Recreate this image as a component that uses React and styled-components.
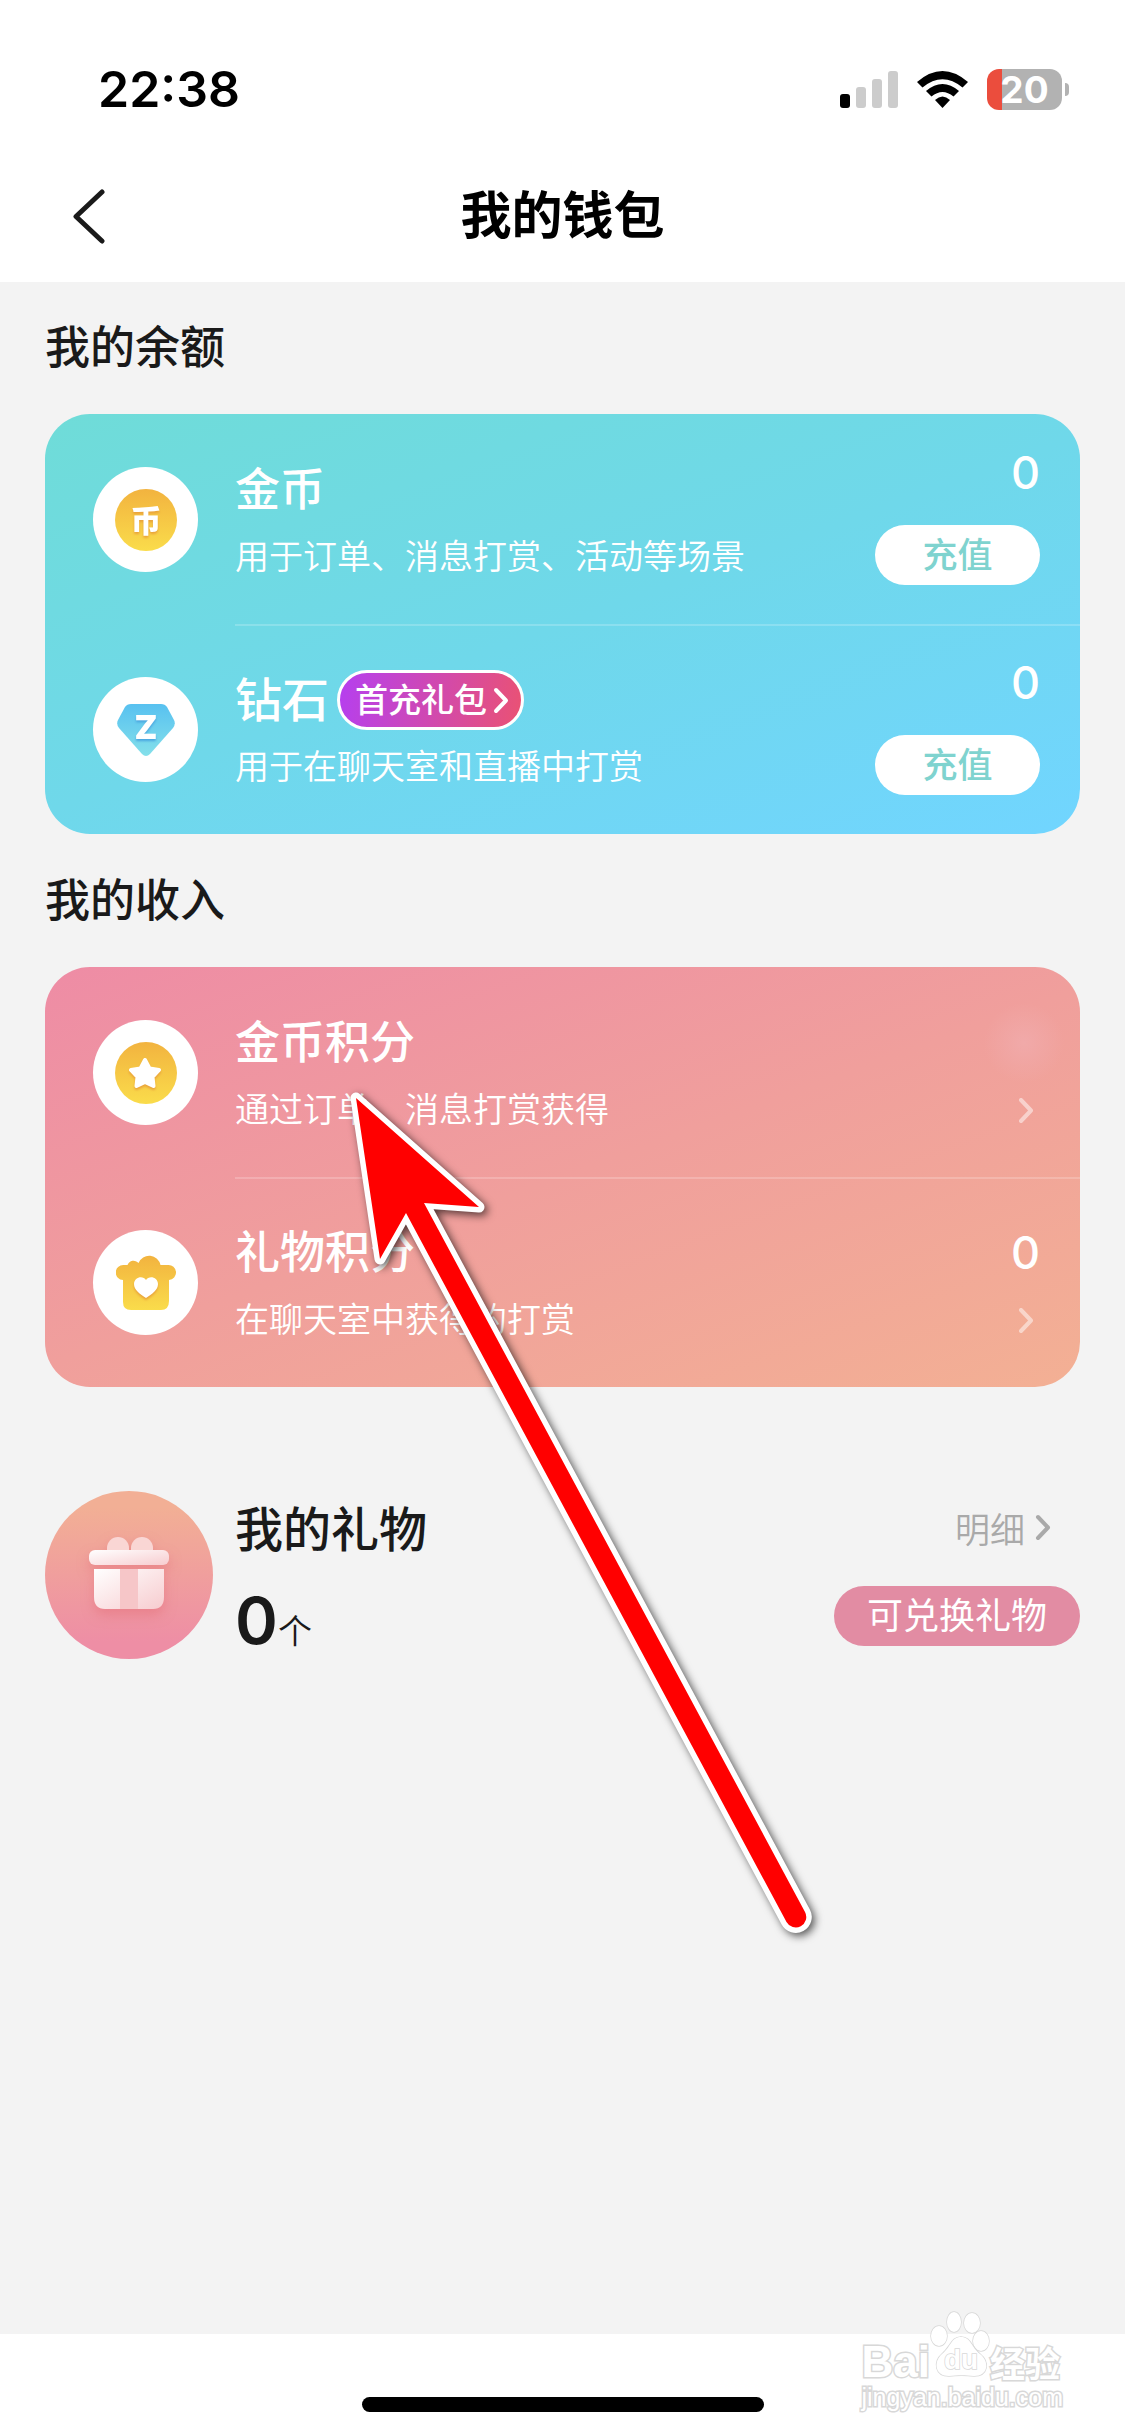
import React from "react";
import styled, { createGlobalStyle } from "styled-components";

const GlobalStyle = createGlobalStyle`
  * {
    box-sizing: border-box;
  }
  body {
    margin: 0;
    background: #f3f3f3;
    font-family: "Inter", "Noto Sans CJK SC", sans-serif;
    color: #1a1a1a;
  }
  h1, h2, h3, p {
    margin: 0;
    font-weight: 500;
  }
  button {
    border: none;
    padding: 0;
    background: none;
    font-family: inherit;
    color: inherit;
    cursor: pointer;
  }
  a {
    color: inherit;
    text-decoration: none;
  }
  svg {
    display: block;
    flex-shrink: 0;
  }
`;

const Page = styled.div`
  position: relative;
  min-height: 100vh;
  display: flex;
  flex-direction: column;
  overflow: hidden;
`;

const Top = styled.header`
  background: #fff;
`;

const StatusBar = styled.div`
  display: flex;
  align-items: center;
  justify-content: space-between;
  height: 150px;
  padding: 28px 56px 0 98px;
`;

const Time = styled.span`
  font-size: 50px;
  line-height: 60px;
  font-weight: 600;
  color: #000;
`;

const StatusIcons = styled.div`
  display: flex;
  align-items: center;
  gap: 19px;
`;

const Battery = styled.div`
  display: flex;
  align-items: center;
  gap: 3px;
`;

const BatteryBody = styled.span`
  display: flex;
  align-items: center;
  justify-content: center;
  width: 75px;
  height: 41px;
  border-radius: 12px;
  background: linear-gradient(90deg, #eb4d3d 20%, #b2b2b2 20%);
  color: #fff;
  font-size: 37px;
  line-height: 41px;
  font-weight: 700;
`;

const BatteryCap = styled.span`
  width: 4px;
  height: 13px;
  border-radius: 0 4px 4px 0;
  background: #b2b2b2;
`;

const NavBar = styled.nav`
  display: grid;
  grid-template-columns: 120px 1fr 120px;
  align-items: center;
  height: 132px;
`;

const BackButton = styled.button`
  display: flex;
  align-items: center;
  padding-left: 72px;
  height: 100%;
`;

const PageTitle = styled.h1`
  text-align: center;
  font-size: 51px;
  line-height: 72px;
  font-weight: 700;
  color: #000;
`;

const Content = styled.main`
  flex: 1;
  padding: 0 45px;
`;

const SectionTitle = styled.h2`
  padding: 30px 0;
  font-size: 45px;
  line-height: 72px;

  ${Content} section + & {
    padding: 31px 0 30px;
  }
`;

const Card = styled.section`
  border-radius: 45px;
  overflow: hidden;
  background: linear-gradient(160deg, ${(props) => props.$from}, ${(props) => props.$mid}, ${(props) => props.$to});
  color: #fff;
`;

const Row = styled.div`
  display: flex;
  height: 210px;
  padding-left: 48px;
`;

const IconCircle = styled.div`
  display: flex;
  align-items: center;
  justify-content: center;
  flex-shrink: 0;
  width: 105px;
  height: 105px;
  margin: 53px 37px 0 0;
  border-radius: 50%;
  background: #fff;
`;

const RowBody = styled.div`
  display: flex;
  flex: 1;
  justify-content: space-between;
  padding-right: 40px;
  border-top: 2px solid ${(props) => (props.$divider ? "rgba(255, 255, 255, 0.2)" : "transparent")};
`;

const RowText = styled.div`
  padding-top: 43px;
`;

const NameLine = styled.div`
  display: flex;
  align-items: center;
  gap: 8px;
  height: 62px;
`;

const Name = styled.h3`
  font-size: ${(props) => (props.$large ? 47 : 45)}px;
  line-height: 62px;
`;

const Desc = styled.p`
  padding-top: 12px;
  font-size: 34px;
  line-height: 48px;
  font-weight: 350;
`;

const PackBadge = styled.button`
  display: flex;
  align-items: center;
  gap: 6px;
  height: 60px;
  padding: 0 12px 0 15px;
  border: 3px solid #fff;
  border-radius: 30px;
  background: linear-gradient(100deg, #b53ff0, #ea5273);
  font-size: 33px;
  line-height: 54px;
  font-weight: 500;
`;

const RowSide = styled.div`
  display: flex;
  flex-direction: column;
  align-items: flex-end;
  padding-top: ${(props) => (props.$low ? 47 : 30)}px;
`;

const Amount = styled.span`
  font-size: 45px;
  line-height: 54px;
  font-weight: 500;
`;

const HiddenAmount = styled.span`
  width: 80px;
  height: 80px;
  margin: -13px -24px -13px 0;
  background: radial-gradient(closest-side, rgba(241, 170, 170, 0.95), rgba(241, 170, 165, 0));
`;

const RechargeButton = styled.button`
  width: 165px;
  height: 60px;
  margin-top: 25px;
  border-radius: 30px;
  background: #fff;
  color: #7fd3cf;
  font-size: 35px;
  line-height: 58px;
  font-weight: 500;
`;

const DetailButton = styled.button`
  display: flex;
  justify-content: flex-end;
  padding: 27px 6px 0 40px;
  opacity: 0.5;
`;

const GiftSection = styled.section`
  display: flex;
  margin-top: 104px;
`;

const GiftCircle = styled.div`
  display: flex;
  align-items: center;
  justify-content: center;
  width: 168px;
  height: 168px;
  margin-right: 22px;
  border-radius: 50%;
  background: linear-gradient(#f2af95 10%, #ee8ea5 90%);
`;

const GiftText = styled.div`
  flex: 1;
  padding-top: 3px;
`;

const GiftTitle = styled.h3`
  font-size: 48px;
  line-height: 72px;
`;

const GiftCount = styled.p`
  display: flex;
  align-items: baseline;
  padding-top: 15px;
  font-size: 34px;
  line-height: 80px;
  font-weight: 350;
`;

const CountNumber = styled.span`
  font-size: 65px;
  font-weight: 600;
`;

const GiftSide = styled.div`
  display: flex;
  flex-direction: column;
  align-items: flex-end;
`;

const DetailLink = styled.a`
  display: flex;
  align-items: center;
  gap: 10px;
  height: 72px;
  padding-right: 29px;
  font-size: 35px;
  font-weight: 350;
  color: #a9a9a9;
`;

const ExchangeButton = styled.button`
  width: 246px;
  height: 60px;
  margin-top: 23px;
  border-radius: 30px;
  background: #e28ca3;
  color: #fff;
  font-size: 36px;
  line-height: 58px;
`;

const BottomBar = styled.footer`
  display: flex;
  align-items: flex-end;
  justify-content: center;
  height: 102px;
  padding-bottom: 24px;
  background: #fff;
`;

const HomeIndicator = styled.span`
  width: 402px;
  height: 15px;
  border-radius: 8px;
  background: #000;
`;

const Pointer = styled.svg`
  position: absolute;
  top: 1080px;
  left: 340px;
  filter: drop-shadow(3px 3px 4px rgba(0, 0, 0, 0.65));
  pointer-events: none;
`;

const Watermark = styled.div`
  position: absolute;
  right: 62px;
  bottom: 27px;
  color: #fff;
  -webkit-text-stroke: 3px #d8d8d8;
  paint-order: stroke fill;
  font-family: "Liberation Sans", "Noto Sans CJK SC", sans-serif;
`;

const WatermarkLogo = styled.div`
  display: flex;
  align-items: baseline;
  font-size: 44px;
  line-height: 40px;
  font-weight: 700;
`;

const WatermarkCjk = styled.span`
  font-size: 35px;
  line-height: 40px;
`;

const WatermarkUrl = styled.div`
  font-size: 25px;
  line-height: 24px;
`;

function Chevron({ color = "#fff" }) {
  return (
    <svg width="16" height="27" viewBox="0 0 16 27" fill="none">
      <path d="M3 3 L13 13.500 L3 24" stroke={color} strokeWidth="4" strokeLinecap="round" strokeLinejoin="round" />
    </svg>
  );
}

function Gold() {
  return (
    <linearGradient id="gold" x1="0" y1="0" x2="0" y2="1">
      <stop offset="0" stopColor="#f2b33f" />
      <stop offset="1" stopColor="#fadc4b" />
    </linearGradient>
  );
}

const GlyphShadow = styled.g`
  filter: drop-shadow(0 2px 1px ${(props) => props.$color});
`;

const IconText = styled.text`
  font-size: ${(props) => props.$size}px;
  font-weight: 900;
  fill: #fff;
  text-anchor: middle;
`;

function CoinIcon() {
  return (
    <svg width="62" height="62" viewBox="0 0 62 62">
      <defs>
        <Gold />
      </defs>
      <circle cx="31" cy="31" r="31" fill="url(#gold)" />
      <GlyphShadow $color="#e9a23a">
        <IconText x="31" y="43" $size={31}>币</IconText>
      </GlyphShadow>
    </svg>
  );
}

function DiamondIcon() {
  return (
    <svg width="60" height="54" viewBox="0 0 60 54">
      <defs>
        <linearGradient id="gem" x1="0" y1="0" x2="0" y2="1">
          <stop offset="0" stopColor="#58c1f0" />
          <stop offset="1" stopColor="#84e0ea" />
        </linearGradient>
      </defs>
      <path
        d="M15 1 H45 Q49 1 51 4 L58 17 Q60 21 57 25 L34 51 Q30 55 26 51 L3 25 Q0 21 2 17 L9 4 Q11 1 15 1 Z"
        fill="url(#gem)"
      />
      <GlyphShadow $color="#4aa6df">
        <IconText x="30" y="36" $size={33}>Z</IconText>
      </GlyphShadow>
    </svg>
  );
}

function StarIcon() {
  return (
    <svg width="62" height="62" viewBox="0 0 62 62">
      <circle cx="31" cy="31" r="31" fill="url(#gold)" />
      <GlyphShadow $color="#e9a23a">
        <path
          d="M30 18 L34.500 26.500 L44 28 L37.500 35 L38.500 44 L30 40 L21.500 44 L22.500 35 L16 28 L25.500 26.500 Z"
          fill="#fff"
          stroke="#fff"
          strokeWidth="4"
          strokeLinejoin="round"
        />
      </GlyphShadow>
    </svg>
  );
}

function GiftPointsIcon() {
  return (
    <svg width="60" height="56" viewBox="0 0 60 56">
      <path
        d="M7.500 10 H11.500 A6.500 6.500 0 0 1 22.500 8 A11.500 11.500 0 0 1 44.500 10 H52 A7.500 7.500 0 0 1 53 25 V46 Q53 55 45 55 H15 Q7 55 7 47 V25 A7.500 7.500 0 0 1 7.500 10 Z"
        fill="url(#gold)"
      />
      <GlyphShadow $color="#e9a23a">
        <path d="M30 43 C24 39 18 35 18 29 C18 22 27 20 30 25 C33 20 42 22 42 29 C42 35 36 39 30 43 Z" fill="#fff" />
      </GlyphShadow>
    </svg>
  );
}

const GiftDrawing = styled.svg`
  overflow: visible;
  filter: drop-shadow(0 6px 6px rgba(228, 110, 120, 0.5));
`;

function GiftIcon() {
  return (
    <GiftDrawing width="84" height="76" viewBox="0 0 84 76">
      <defs>
        <linearGradient id="box" x1="0" y1="0" x2="1" y2="1">
          <stop offset="0" stopColor="#fff" />
          <stop offset="1" stopColor="#f7cccf" />
        </linearGradient>
      </defs>
      <path d="M20 14 V11 A11 11 0 0 1 42 11 V14 Z" fill="#f9d6d4" />
      <path d="M44 14 V11 A11 11 0 0 1 66 11 V14 Z" fill="#f9d6d4" />
      <rect x="2" y="13" width="80" height="15" rx="6" fill="url(#box)" />
      <path d="M7 32 H77 V60 Q77 72 66 72 H18 Q7 72 7 60 Z" fill="url(#box)" />
      <rect x="33" y="32" width="18" height="40" fill="#f6c6c8" />
    </GiftDrawing>
  );
}

function BalanceRow({ icon, name, large, badge, desc, amount, divider }) {
  return (
    <Row>
      <IconCircle>{icon}</IconCircle>
      <RowBody $divider={divider}>
        <RowText>
          <NameLine>
            <Name $large={large}>{name}</Name>
            {badge && (
              <PackBadge type="button">
                {badge}
                <Chevron />
              </PackBadge>
            )}
          </NameLine>
          <Desc>{desc}</Desc>
        </RowText>
        <RowSide>
          <Amount>{amount}</Amount>
          <RechargeButton type="button">充值</RechargeButton>
        </RowSide>
      </RowBody>
    </Row>
  );
}

function IncomeRow({ icon, name, desc, amount, divider }) {
  return (
    <Row>
      <IconCircle>{icon}</IconCircle>
      <RowBody $divider={divider}>
        <RowText>
          <NameLine>
            <Name>{name}</Name>
          </NameLine>
          <Desc>{desc}</Desc>
        </RowText>
        <RowSide $low>
          {amount === null ? <HiddenAmount /> : <Amount>{amount}</Amount>}
          <DetailButton type="button" aria-label={name}>
            <Chevron />
          </DetailButton>
        </RowSide>
      </RowBody>
    </Row>
  );
}

export default function App() {
  return (
    <Page>
      <GlobalStyle />
      <Top>
        <StatusBar>
          <Time>22:38</Time>
          <StatusIcons>
            <svg width="58" height="37" viewBox="0 0 58 37">
              <rect x="0" y="23" width="10" height="14" rx="3" fill="#000" />
              <rect x="16" y="16" width="10" height="21" rx="3" fill="#ccc" />
              <rect x="32" y="8" width="10" height="29" rx="3" fill="#ccc" />
              <rect x="48" y="0" width="10" height="37" rx="3" fill="#ccc" />
            </svg>
            <svg width="51" height="37" viewBox="0 0 51 37">
              <path d="M0 11 Q25.500 -11 51 11 L45.500 16.500 Q25.500 0 5.500 16.500 Z" />
              <path d="M9 20 Q25.500 6 42 20 L36.500 25.500 Q25.500 16.500 14.500 25.500 Z" />
              <path d="M18 29 Q25.500 22 33 29 L25.500 37 Z" />
            </svg>
            <Battery>
              <BatteryBody>20</BatteryBody>
              <BatteryCap />
            </Battery>
          </StatusIcons>
        </StatusBar>
        <NavBar>
          <BackButton type="button" aria-label="返回">
            <svg width="33" height="55" viewBox="0 0 33 55" fill="none">
              <path d="M30 3 L4 27.500 L30 52" stroke="#1a1a1a" strokeWidth="5" strokeLinecap="round" strokeLinejoin="round" />
            </svg>
          </BackButton>
          <PageTitle>我的钱包</PageTitle>
        </NavBar>
      </Top>

      <Content>
        <SectionTitle>我的余额</SectionTitle>
        <Card $from="#6fdcd8" $mid="#6fd8ea" $to="#71d5ff">
          <BalanceRow icon={<CoinIcon />} name="金币" desc="用于订单、消息打赏、活动等场景" amount="0" />
          <BalanceRow
            icon={<DiamondIcon />}
            name="钻石"
            large
            badge="首充礼包"
            desc="用于在聊天室和直播中打赏"
            amount="0"
            divider
          />
        </Card>

        <SectionTitle>我的收入</SectionTitle>
        <Card $from="#ee8ca5" $mid="#f09f9c" $to="#f3b094">
          <IncomeRow icon={<StarIcon />} name="金币积分" desc="通过订单、消息打赏获得" amount={null} />
          <IncomeRow icon={<GiftPointsIcon />} name="礼物积分" desc="在聊天室中获得的打赏" amount="0" divider />
        </Card>

        <GiftSection>
          <GiftCircle>
            <GiftIcon />
          </GiftCircle>
          <GiftText>
            <GiftTitle>我的礼物</GiftTitle>
            <GiftCount>
              <CountNumber>0</CountNumber>个
            </GiftCount>
          </GiftText>
          <GiftSide>
            <DetailLink href="#detail">
              明细
              <Chevron color="#a9a9a9" />
            </DetailLink>
            <ExchangeButton type="button">可兑换礼物</ExchangeButton>
          </GiftSide>
        </GiftSection>
      </Content>

      <BottomBar>
        <HomeIndicator />
      </BottomBar>

      <Pointer width="490" height="870" viewBox="340 1080 490 870">
        <path
          d="M356 1098 L479 1207 L424 1203 L805 1912 A10.500 10.500 0 0 1 786.500 1922 L406 1213 L380 1259 Z"
          fill="#f00"
          stroke="#fff"
          strokeWidth="11"
          strokeLinejoin="round"
          paintOrder="stroke"
        />
      </Pointer>

      <Watermark>
        <WatermarkLogo>
          Bai
          <svg width="60" height="67" viewBox="0 0 60 67" fill="#fff" stroke="#d8d8d8" strokeWidth="1.500">
            <ellipse cx="9" cy="26" rx="8" ry="10" />
            <ellipse cx="24" cy="12" rx="7" ry="10" />
            <ellipse cx="42" cy="13" rx="8" ry="10" />
            <ellipse cx="51" cy="31" rx="8" ry="10" />
            <path d="M31 27 C41 27 41 37 50 44 C60 52 58 66 44 66 C35 65 28 65 19 66 C5 66 3 52 12 44 C21 37 21 27 31 27 Z" />
            <text x="14" y="59" fontSize="28">du</text>
          </svg>
          <WatermarkCjk>经验</WatermarkCjk>
        </WatermarkLogo>
        <WatermarkUrl>jingyan.baidu.com</WatermarkUrl>
      </Watermark>
    </Page>
  );
}
